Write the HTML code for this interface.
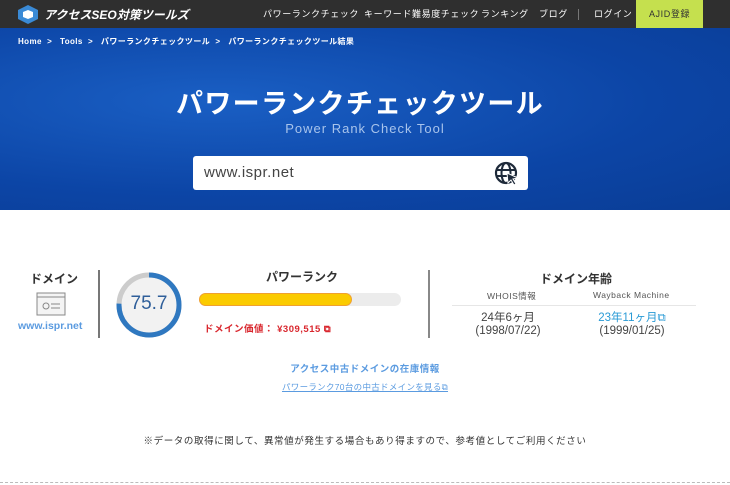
<!DOCTYPE html><html><head><meta charset="utf-8"><style>
*{margin:0;padding:0;box-sizing:border-box}
body{width:730px;height:485px;overflow:hidden;background:#fff;font-family:"Liberation Sans","Noto Sans CJK JP",sans-serif;position:relative;color:#333}
.hd{position:absolute;left:0;top:0;width:730px;height:28px;background:#2f2f2f}
.nav{position:absolute;top:0;height:28px;line-height:28px;color:#fff;font-size:9px;letter-spacing:0.6px}
.hero{position:absolute;left:0;top:28px;width:730px;height:182px;background:radial-gradient(ellipse at 30% 40%,#1a5fc4,#0c45a6 60%,#0a3d96)}
.bc{position:absolute;top:36px;color:#fff;font-size:8px;font-weight:bold;letter-spacing:0.4px}
.a{position:absolute;white-space:nowrap}
</style></head><body>
<div class="hd"></div>
<svg class="a" style="left:17px;top:4px" width="22" height="20"><polygon points="11,1 21,6 21,15 11,20 1,15 1,6" fill="#3a8ad6"/><polygon points="6,8 11,6 16,8 16,13 11,15 6,13" fill="#fff"/></svg>
<div class="a" style="left:44px;top:6px;color:#fff;font-size:12px;font-weight:bold;font-style:italic">アクセスSEO対策ツールズ</div>
<div class="nav" style="left:263px">パワーランクチェック</div>
<div class="nav" style="left:364px">キーワード難易度チェック</div>
<div class="nav" style="left:481px">ランキング</div>
<div class="nav" style="left:539px">ブログ</div>
<div class="a" style="left:578px;top:9px;width:1px;height:11px;background:#777"></div>
<div class="nav" style="left:594px">ログイン</div>
<div class="a" style="left:636px;top:0;width:67px;height:28px;background:#c5e04e;color:#333;font-size:9px;line-height:28px;text-align:center;letter-spacing:0.6px">AJID登録</div>
<div class="hero"></div>
<div class="bc" style="left:18px">Home &nbsp;&gt; &nbsp; Tools &nbsp;&gt; &nbsp; パワーランクチェックツール &nbsp;&gt; &nbsp; パワーランクチェックツール結果</div>
<div class="a" style="left:0;width:720px;top:86px;text-align:center;color:#fff;font-size:27px;font-weight:bold;line-height:36px;letter-spacing:1.3px">パワーランクチェックツール</div>
<div class="a" style="left:0;width:730px;top:121px;text-align:center;color:#a8c4ec;font-size:13px;letter-spacing:1px">Power Rank Check Tool</div>
<div class="a" style="left:193px;top:156px;width:335px;height:34px;background:#fff;border-radius:3px"></div>
<div class="a" style="left:204px;top:164px;font-size:15px;color:#444;letter-spacing:0.5px">www.ispr.net</div>
<svg class="a" style="left:494px;top:161px" width="26" height="26" viewBox="0 0 26 26"><circle cx="12" cy="12" r="10" fill="none" stroke="#1e2a3a" stroke-width="2.2"/><ellipse cx="12" cy="12" rx="4.5" ry="10" fill="none" stroke="#1e2a3a" stroke-width="2"/><line x1="2" y1="9" x2="22" y2="9" stroke="#1e2a3a" stroke-width="2"/><line x1="2" y1="15" x2="22" y2="15" stroke="#1e2a3a" stroke-width="2"/><polygon points="13,12 24,17 19,18 22,23 20,24 17,19 14,22" fill="#1e2a3a" stroke="#fff" stroke-width="1"/></svg>

<div class="a" style="left:30px;top:270px;font-size:12px;font-weight:bold">ドメイン</div>
<svg class="a" style="left:36px;top:292px" width="30" height="24"><rect x="1" y="1" width="28" height="22" fill="#f4f4f4" stroke="#888"/><line x1="1" y1="5" x2="29" y2="5" stroke="#888"/><circle cx="10" cy="14" r="3" fill="none" stroke="#888"/><line x1="15" y1="12" x2="24" y2="12" stroke="#888"/><line x1="15" y1="16" x2="24" y2="16" stroke="#888"/></svg>
<div class="a" style="left:18px;top:320px;font-size:10.5px;font-weight:bold;color:#5b9be0">www.ispr.net</div>
<div class="a" style="left:98px;top:270px;width:2px;height:68px;background:#777"></div>
<svg class="a" style="left:114px;top:270px" width="70" height="70"><circle cx="35" cy="35" r="30" fill="#f2f2f2" stroke="#ccc" stroke-width="5"/><circle cx="35" cy="35" r="30" fill="none" stroke="#2f78c0" stroke-width="5" stroke-dasharray="142.6 188.5" transform="rotate(-90 35 35)"/></svg>
<div class="a" style="left:114px;top:293px;width:70px;text-align:center;font-size:19px;color:#2f5f9a">75.7</div>
<div class="a" style="left:266px;top:268px;font-size:12px;font-weight:bold">パワーランク</div>
<div class="a" style="left:199px;top:293px;width:202px;height:13px;background:#ececec;border-radius:7px"></div>
<div class="a" style="left:199px;top:293px;width:153px;height:13px;background:#fbcb00;border:1px solid #f0a030;border-radius:7px"></div>
<div class="a" style="left:204px;top:321px;font-size:9.5px;font-weight:bold;color:#d9272e;letter-spacing:0.5px">ドメイン価値： ¥309,515 ⧉</div>
<div class="a" style="left:428px;top:270px;width:2px;height:68px;background:#888"></div>
<div class="a" style="left:540px;top:270px;font-size:12px;font-weight:bold">ドメイン年齢</div>
<div class="a" style="left:487px;top:290px;font-size:8.5px;color:#555;letter-spacing:0.5px">WHOIS情報</div>
<div class="a" style="left:593px;top:290px;font-size:8.5px;color:#555;letter-spacing:0.5px">Wayback Machine</div>
<div class="a" style="left:452px;top:305px;width:244px;height:1px;background:#e6e6e6"></div>
<div class="a" style="left:468px;top:312px;width:80px;text-align:center;font-size:11.5px;line-height:12.5px;color:#444">24年6ヶ月<br>(1998/07/22)</div>
<div class="a" style="left:592px;top:312px;width:80px;text-align:center;font-size:11.5px;line-height:12.5px;color:#444"><span style="color:#2a9bd6">23年11ヶ月⧉</span><br>(1999/01/25)</div>
<div class="a" style="left:0;width:730px;top:361px;text-align:center;font-size:9.5px;font-weight:bold;color:#5b9be0;letter-spacing:0.5px">アクセス中古ドメインの在庫情報</div>
<div class="a" style="left:0;width:730px;top:381px;text-align:center;font-size:8.5px;color:#5b9be0;text-decoration:underline;letter-spacing:0.3px">パワーランク70台の中古ドメインを見る⧉</div>
<div class="a" style="left:0;width:730px;top:433px;text-align:center;font-size:9.5px;color:#333;letter-spacing:0.6px">※データの取得に関して、異常値が発生する場合もあり得ますので、参考値としてご利用ください</div>
<div class="a" style="left:0;top:482px;width:730px;border-top:1px dashed #bbb"></div>
</body></html>
